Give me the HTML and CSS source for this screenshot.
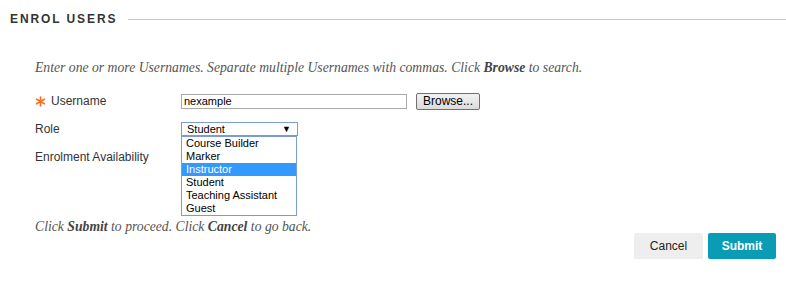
FILE: index.html
```html
<!DOCTYPE html>
<html lang="en">
<head>
    <meta charset="UTF-8">
    <title>Enrol Users</title>
    <link rel="stylesheet" href="styles.css">
</head>
<body>
    <div class="step-title">
        <h2>Enrol Users</h2>
        <span class="rule"></span>
    </div>

    <p class="instructions">Enter one or more Usernames. Separate multiple Usernames with commas. Click <b>Browse</b> to search.</p>

    <div class="fields">
        <div class="field">
            <div class="label">
                <svg class="req" width="11" height="11" viewBox="0 0 11 11">
                    <g stroke="#f37021" stroke-width="1.6" stroke-linecap="round">
                        <line x1="5.5" y1="1" x2="5.5" y2="10"/>
                        <line x1="1.6" y1="3.2" x2="9.4" y2="7.8"/>
                        <line x1="1.6" y1="7.8" x2="9.4" y2="3.2"/>
                    </g>
                </svg>Username
            </div>
            <div class="control">
                <div class="text-input">nexample</div>
                <div class="browse">Browse...</div>
            </div>
        </div>
        <div class="field">
            <div class="label">Role</div>
            <div class="control">
                <div class="select-wrap">
                    <div class="select">Student<span class="arrow">&#9660;</span></div>
                    <ul class="options">
                        <li>Course Builder</li>
                        <li>Marker</li>
                        <li class="active">Instructor</li>
                        <li>Student</li>
                        <li>Teaching Assistant</li>
                        <li>Guest</li>
                    </ul>
                </div>
            </div>
        </div>
        <div class="field">
            <div class="label">Enrolment Availability</div>
            <div class="control"></div>
        </div>
    </div>

    <p class="instructions submit-note">Click <b>Submit</b> to proceed. Click <b>Cancel</b> to go back.</p>

    <div class="actions">
        <div class="btn cancel">Cancel</div>
        <div class="btn submit">Submit</div>
    </div>
</body>
</html>
```

FILE: styles.css
```css
body {
    margin: 0;
    background: #fff;
    font-family: Arial, "Liberation Sans", sans-serif;
    font-size: 12px;
    color: #333;
}

.step-title {
    display: flex;
    align-items: center;
    padding: 10px 0 0 10px;
    height: 18px;
}
.step-title h2 {
    margin: 0;
    font-size: 12px;
    font-weight: bold;
    letter-spacing: 1.9px;
    text-transform: uppercase;
    color: #333;
}
.step-title .rule {
    flex: 1;
    height: 1px;
    background: #c8c8c8;
    margin-left: 11px;
}

.instructions {
    font-family: "Liberation Serif", "Times New Roman", serif;
    font-style: italic;
    font-size: 13.7px;
    line-height: 16px;
    color: #555;
    margin: 0;
    padding-left: 35px;
}
.instructions b {
    color: #444;
}
.step-title + .instructions {
    margin-top: 32px;
}

.fields {
    margin-top: 11px;
    padding-left: 35px;
}
.field {
    display: flex;
    align-items: center;
    height: 28px;
}
.label {
    width: 146px;
    font-size: 12px;
    color: #333;
    display: flex;
    align-items: center;
}
.req {
    margin-right: 5px;
}
.control {
    display: flex;
    align-items: center;
}
.text-input {
    width: 222px;
    height: 13px;
    border: 1px solid #a9a9a9;
    font-size: 11px;
    line-height: 13px;
    padding-left: 2px;
    color: #000;
}
.browse {
    margin-left: 9px;
    height: 15px;
    line-height: 15px;
    padding: 0 6px;
    border: 1px solid #707070;
    border-radius: 2px;
    background: linear-gradient(#f2f2f2, #dcdcdc);
    font-size: 12px;
    color: #000;
}

.select-wrap {
    position: relative;
}
.select {
    width: 104px;
    height: 12px;
    border: 1px solid #7a9cd3;
    padding: 0 6px 0 5px;
    font-size: 11px;
    line-height: 12px;
    display: flex;
    justify-content: space-between;
    color: #000;
}
.arrow {
    font-size: 9px;
}
.options {
    position: absolute;
    top: 14px;
    left: 0;
    width: 114px;
    margin: 0;
    padding: 0;
    list-style: none;
    border: 1px solid #7a9cd3;
    background: #fff;
    font-size: 11px;
    color: #000;
    z-index: 2;
}
.options li {
    height: 13px;
    line-height: 13px;
    padding-left: 4px;
}
.options li.active {
    background: #3399ff;
    color: #fff;
}

.submit-note {
    margin-top: 48px;
}

.actions {
    display: flex;
    justify-content: flex-end;
    gap: 5px;
    padding-right: 10px;
    margin-top: -2px;
}
.btn {
    height: 26px;
    line-height: 26px;
    border-radius: 2px;
    font-size: 12px;
    text-align: center;
}
.cancel {
    width: 69px;
    background: #eee;
    color: #222;
}
.submit {
    width: 68px;
    background: #0a9bb5;
    color: #fff;
    font-weight: bold;
}
```
